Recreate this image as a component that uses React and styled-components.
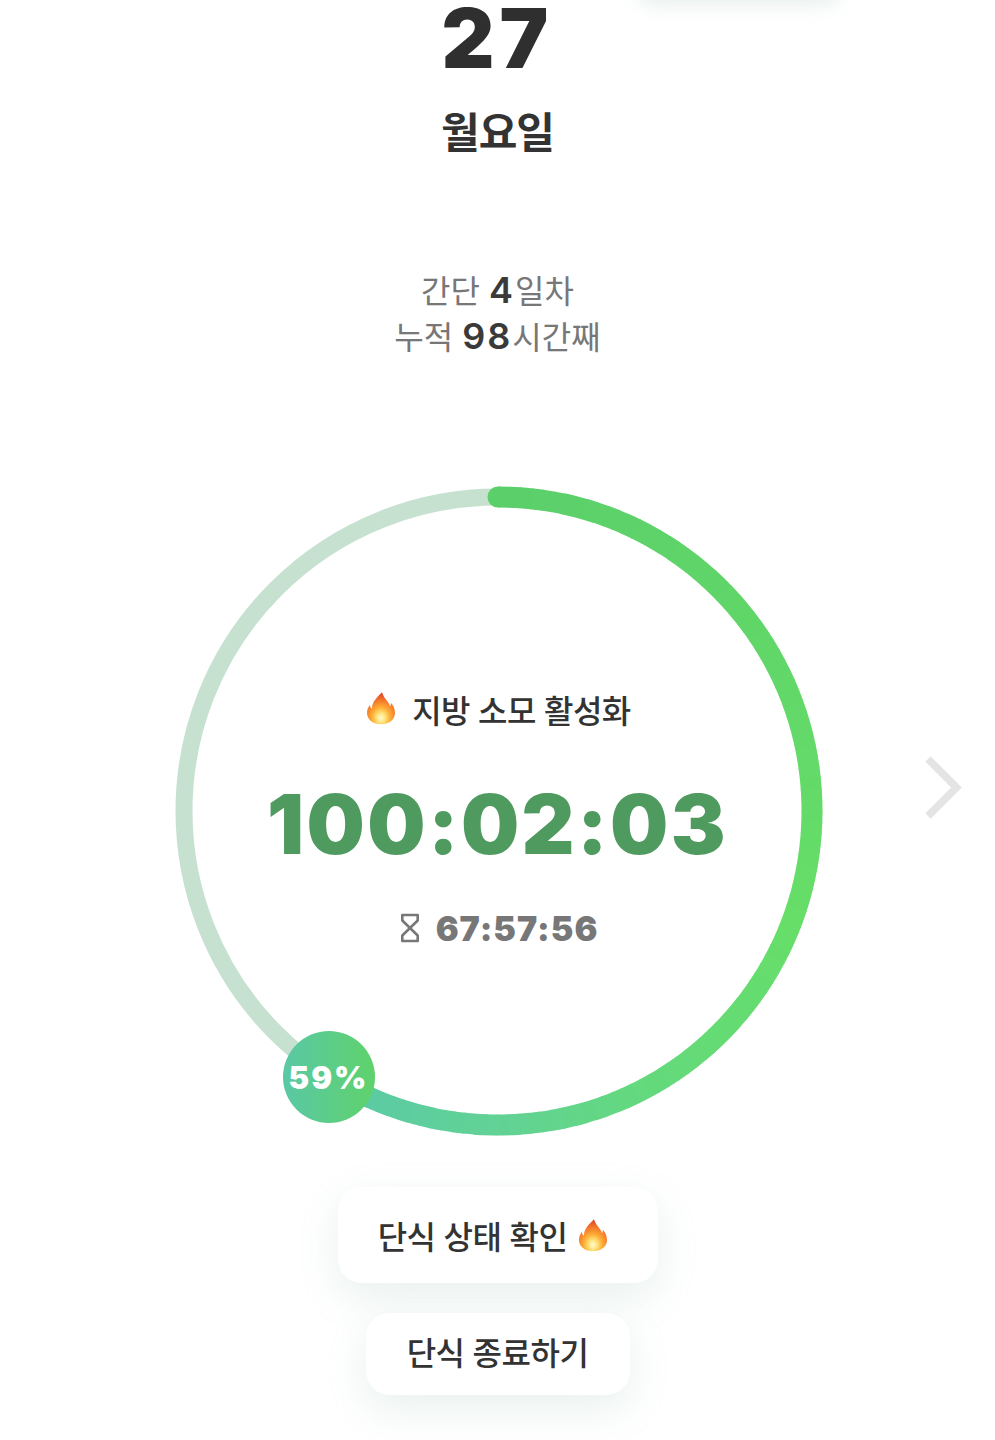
import React from 'react';
import styled, { createGlobalStyle } from 'styled-components';

const GlobalStyle = createGlobalStyle`
  html, body {
    margin: 0;
    padding: 0;
    background: #fff;
  }
`

const KR = `Inter, "Noto Sans CJK KR", sans-serif`

// ring geometry, viewBox is 660 x 660
const R = 314
const C = 330
const PERCENT = 59

const polar = (deg) => {
    const a = (deg - 90) * Math.PI / 180
    return [C + R * Math.cos(a), C + R * Math.sin(a)]
}

const STOPS = [
    [0, [91, 207, 106]],
    [110, [102, 222, 104]],
    [150, [100, 217, 124]],
    [180, [98, 210, 150]],
    [213, [88, 200, 168]],
]

const colorAt = (deg) => {
    let i = 0
    while (i < STOPS.length - 2 && deg > STOPS[i + 1][0]) i++
    const [d0, c0] = STOPS[i]
    const [d1, c1] = STOPS[i + 1]
    const t = (deg - d0) / (d1 - d0)
    return `rgb(${c0.map((v, k) => Math.round(v + (c1[k] - v) * t)).join(',')})`
}

const Flame = ({ size }) => (
    <svg width={size} height={size * 1.16} viewBox="0 0 28 32">
        <defs>
            <radialGradient id="flameFill" cx="50%" cy="80%" r="78%">
                <stop offset="0" stopColor="#fffbd0" />
                <stop offset="0.2" stopColor="#ffe27a" />
                <stop offset="0.42" stopColor="#fdae35" />
                <stop offset="0.72" stopColor="#f4752a" />
                <stop offset="1" stopColor="#df4426" />
            </radialGradient>
        </defs>
        <path
            fill="url(#flameFill)"
            d="M15 0C16 4 19 7 21 10C22 11.500 22.600 12.500 23 14C23.800 13 24 12 23.800 10.500C26.500 13.500 28 17 28 20.500C28 27.500 21.800 32 14 32C6.200 32 0 27.500 0 20.500C0 17.500 1.200 15 3 12.500C3 14.500 3.600 15.800 5 16.500C4.800 10 9.500 5.500 15 0z"
        />
    </svg>
)

const Hourglass = () => (
    <svg width="20" height="30" viewBox="0 0 20 30" fill="none" stroke="#777" strokeWidth="2.600">
        <path d="M2.300 2h15.400v5.500L10 15l7.700 7.500V28H2.300v-5.500L10 15 2.300 7.500z" strokeLinejoin="round" />
    </svg>
)

const App = () => {
    const end = PERCENT * 3.6
    const [sx, sy] = polar(0)
    const segments = []
    for (let d = 0; d < end; d += 2) {
        const [x0, y0] = polar(d)
        const [x1, y1] = polar(Math.min(d + 2.2, end))
        segments.push(
            <path key={d} d={`M${x0} ${y0}A${R} ${R} 0 0 1 ${x1} ${y1}`} stroke={colorAt(d)} strokeWidth="21" fill="none" />
        )
    }
    return (
        <Page>
            <GlobalStyle />
            <HiddenCard />
            <DayNumber>27</DayNumber>
            <DayName>월요일</DayName>
            <Stats>
                <StatLine>간단 <b>4</b>일차</StatLine>
                <StatLine>누적 <b>98</b>시간째</StatLine>
            </Stats>
            <RingRow>
                <span />
                <Ring>
                    <svg width="660" height="660" viewBox="0 0 660 660">
                        <circle cx={C} cy={C} r={R} fill="none" stroke="#c6e1d0" strokeWidth="17" />
                        {segments}
                        <circle cx={sx} cy={sy} r="10.500" fill={colorAt(0)} />
                    </svg>
                    <RingCenter>
                        <Phase><Flame size={28} /><span>지방 소모 활성화</span></Phase>
                        <Elapsed>100:02:03</Elapsed>
                        <Remaining><Hourglass /><span>67:57:56</span></Remaining>
                    </RingCenter>
                    <Badge>59%</Badge>
                </Ring>
                <Chevron>
                    <svg width="38" height="63" viewBox="0 0 38 63" fill="none">
                        <path d="M3 3l28.500 28.500L3 60" stroke="#e4e4e4" strokeWidth="7.500" />
                    </svg>
                </Chevron>
            </RingRow>
            <Buttons>
                <ActionButton $wide>단식 상태 확인 <Flame size={28} /></ActionButton>
                <ActionButton>단식 종료하기</ActionButton>
            </Buttons>
        </Page>
    )
}

export default App;

const Page = styled.div`
    position: relative;
    width: 995px;
    height: 1440px;
    overflow: hidden;
    display: flex;
    flex-direction: column;
    align-items: center;
    background: #fff;
    font-family: ${KR};
`

const HiddenCard = styled.div`
    position: absolute;
    top: -60px;
    left: 636px;
    width: 206px;
    height: 60px;
    border-radius: 20px;
    background: #fff;
    box-shadow: 0 6px 18px rgba(120, 170, 150, 0.16);
`

const DayNumber = styled.div`
    margin-top: 1px;
    font-size: 82px;
    line-height: 76px;
    font-weight: 900;
    letter-spacing: 5px;
    color: #2f2f2f;
`

const DayName = styled.div`
    margin-top: 26px;
    font-size: 42px;
    line-height: 60px;
    font-weight: 700;
    color: #333;
    letter-spacing: -1px;
`

const Stats = styled.div`
    margin-top: 105px;
    display: flex;
    flex-direction: column;
    align-items: center;
    color: #777;
    font-size: 32px;
    font-weight: 400;
`

const StatLine = styled.div`
    line-height: 45px;
    b {
        font-size: 36px;
        font-weight: 600;
        letter-spacing: 2px;
        color: #3a3a3a;
    }
`

const RingRow = styled.div`
    margin-top: 121px;
    width: 100%;
    display: grid;
    grid-template-columns: 1fr 660px 1fr;
    align-items: center;
`

const Ring = styled.div`
    position: relative;
    width: 660px;
    height: 660px;
    svg {
        display: block;
    }
`

const RingCenter = styled.div`
    position: absolute;
    inset: 0;
    padding-top: 12px;
    box-sizing: border-box;
    display: flex;
    flex-direction: column;
    align-items: center;
    justify-content: center;
`

const Phase = styled.div`
    margin-left: 3px;
    display: flex;
    align-items: center;
    gap: 17px;
    font-size: 32px;
    font-weight: 500;
    color: #333;
    letter-spacing: -0.5px;
`

const Elapsed = styled.div`
    margin-top: 43px;
    font-size: 82px;
    line-height: 100px;
    font-weight: 900;
    letter-spacing: 2.400px;
    color: #4f9a5e;
`

const Remaining = styled.div`
    margin-top: 33px;
    margin-left: 3px;
    display: flex;
    align-items: center;
    gap: 16px;
    font-size: 34px;
    font-weight: 900;
    letter-spacing: 1px;
    color: #777;
`

const Badge = styled.div`
    position: absolute;
    left: 115px;
    top: 550px;
    width: 92px;
    height: 92px;
    border-radius: 50%;
    display: flex;
    align-items: center;
    justify-content: center;
    background: linear-gradient(90deg, #5ac8a5, #5fd26c);
    color: #fff;
    font-size: 31px;
    font-weight: 900;
    letter-spacing: 2px;
`

const Chevron = styled.div`
    display: flex;
    justify-content: flex-end;
    padding-right: 32px;
    margin-bottom: 48px;
`

const Buttons = styled.div`
    margin-top: 46px;
    display: flex;
    flex-direction: column;
    align-items: center;
    gap: 30px;
`

const ActionButton = styled.button`
    display: flex;
    align-items: center;
    justify-content: center;
    gap: 12px;
    width: ${p => (p.$wide ? '320px' : '264px')};
    height: ${p => (p.$wide ? '96px' : '82px')};
    padding: ${p => (p.$wide ? '0 10px 0 0' : '0 0 6px 0')};
    border: 0;
    border-radius: 24px;
    background: #fff;
    box-shadow: 0 14px 40px rgba(120, 170, 150, 0.16);
    font-family: ${KR};
    font-size: 32px;
    font-weight: 500;
    color: #333;
    letter-spacing: -0.5px;
`
